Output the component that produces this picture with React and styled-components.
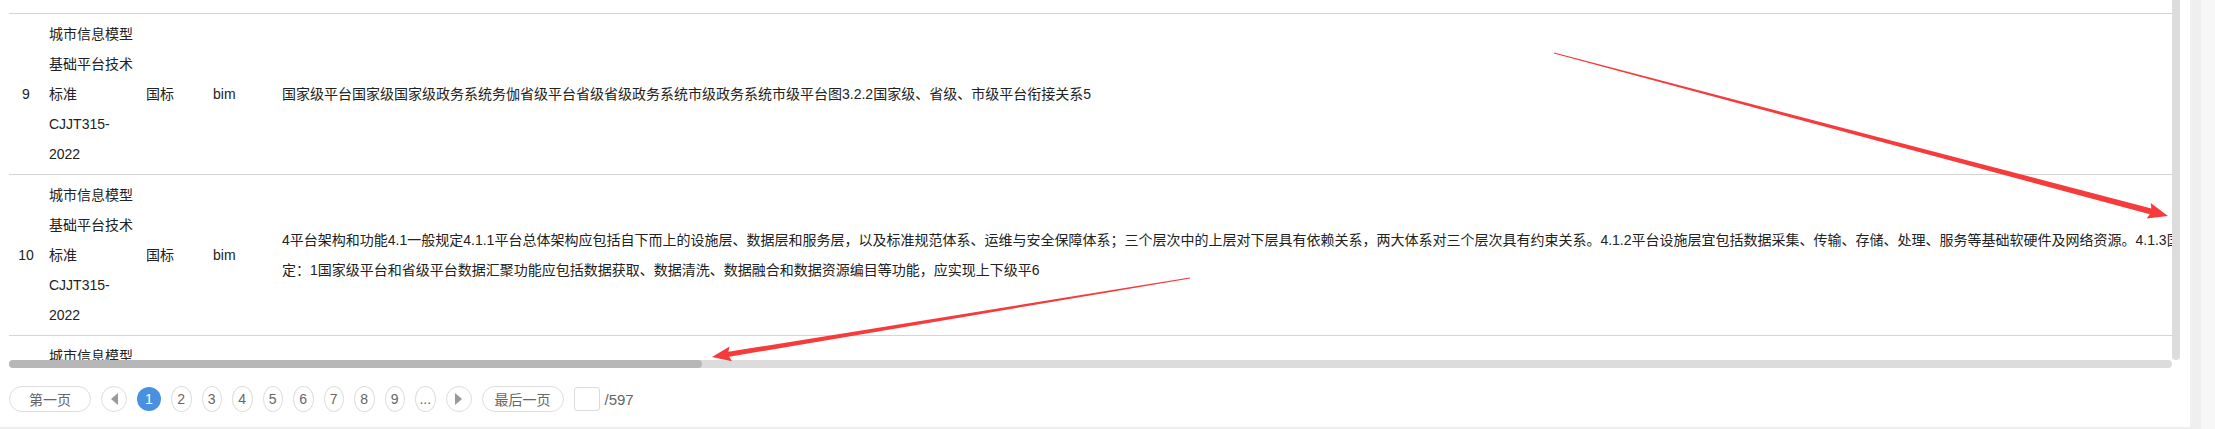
import React from 'react'
import styled, { createGlobalStyle } from 'styled-components'

const GlobalStyle = createGlobalStyle`
  html, body {
    margin: 0;
    padding: 0;
    background: #fff;
  }
  body {
    font-family: "Liberation Sans", "Noto Sans CJK SC", sans-serif;
  }
`

const Page = styled.div`
  position: relative;
  display: flex;
  width: 2215px;
  height: 429px;
  overflow: hidden;
`

const Main = styled.div`
  box-sizing: border-box;
  width: 2190px;
  height: 429px;
  padding: 0 10px 0 9px;
  border-bottom: 2px solid #eeeeee;
  display: flex;
  flex-direction: column;
`

const SideGutter = styled.div`
  width: 11px;
  background: #efefef;
`

const SidePanel = styled.div`
  flex: 1;
  background: #f7f7f7;
`

// table area with its own drawn scrollbars
const ScrollFrame = styled.div`
  display: grid;
  grid-template-columns: 1fr 8px;
  grid-template-rows: 360px 8px;
  height: 368px;
`

const Viewport = styled.div`
  box-sizing: border-box;
  padding-top: 13px;
  overflow: hidden;
`

const VBar = styled.div`
  background: #dcdcdc;
  border-radius: 0 0 4px 4px;
`

const HBar = styled.div`
  display: flex;
  background: #dcdcdc;
  border-radius: 4px;
`

const HThumb = styled.div`
  background: #b7b7b7;
  border-radius: 4px;
`

const Table = styled.table`
  width: 6750px;
  table-layout: fixed;
  border-collapse: collapse;
  font-size: 14px;
  line-height: 30px;
  color: #222;
`

const Row = styled.tr`
  border-top: 1px solid #d4d4d4;
  border-bottom: 1px solid #d4d4d4;
`

const Cell = styled.td`
  padding: 5px 6px;
  vertical-align: middle;
  text-align: ${p => (p.$center ? 'center' : 'left')};
  white-space: ${p => (p.$pre ? 'pre-line' : 'normal')};
`

const Pager = styled.div`
  display: flex;
  align-items: center;
  gap: 10px;
  height: 26px;
  margin-top: 18px;
  font-size: 14px;
  color: #666;
`

const PagerButton = styled.button`
  box-sizing: border-box;
  display: flex;
  align-items: center;
  justify-content: center;
  flex: none;
  width: ${p => p.$w}px;
  height: 26px;
  padding: 0;
  border: 1px solid #dedede;
  border-radius: ${p => (p.$round ? '50%' : '13px')};
  background: #fff;
  color: #666;
  font-family: inherit;
  font-size: 14px;
  cursor: pointer;

  svg {
    display: block;
  }
`

const PageNumber = styled(PagerButton)`
  width: ${p => (p.$active ? 24 : 20.5)}px;
  height: ${p => (p.$active ? 24 : 26)}px;
  border-radius: 50%;
  ${p => p.$active && `
    border: none;
    background: #4a90e2;
    color: #fff;
  `}
`

const JumpBox = styled.div`
  display: flex;
  align-items: center;
  gap: 5px;
`

const JumpInput = styled.input`
  box-sizing: border-box;
  width: 26px;
  height: 24px;
  padding: 0 4px;
  border: 1px solid #dcdcdc;
  border-radius: 3px;
  outline: none;
`

const Total = styled.span`
  font-size: 15px;
  color: #666;
`

const Overlay = styled.svg`
  position: absolute;
  left: 0;
  top: 0;
  width: 2215px;
  height: 429px;
  pointer-events: none;
`

const NAME = '城市信息模型基础平台技术标准CJJT315-2022'

const rows = [
  {
    no: 9,
    type: '国标',
    tag: 'bim',
    content: '国家级平台国家级国家级政务系统务伽省级平台省级省级政务系统市级政务系统市级平台图3.2.2国家级、省级、市级平台衔接关系5'
  },
  {
    no: 10,
    type: '国标',
    tag: 'bim',
    content:
      '4平台架构和功能4.1一般规定4.1.1平台总体架构应包括自下而上的设施层、数据层和服务层，以及标准规范体系、运维与安全保障体系；三个层次中的上层对下层具有依赖关系，两大体系对三个层次具有约束关系。4.1.2平台设施层宜包括数据采集、传输、存储、处理、服务等基础软硬件及网络资源。4.1.3国家级、省级、市级平台应具备数据汇聚、数据管理、查询与可视化、平台分析、平台运维、开发接口等基本功能。4.2数据汇聚4.2.1数据汇聚功能应符合下列规\n' +
      '定：1国家级平台和省级平台数据汇聚功能应包括数据获取、数据清洗、数据融合和数据资源编目等功能，应实现上下级平6'
  },
  {
    no: 11,
    type: '国标',
    tag: 'bim',
    content: '台数据的汇聚；2市级平台数据汇聚功能应包括数据获取、数据清洗、数据融合和数据资源编目等功能7'
  },
  {
    no: 12,
    type: '国标',
    tag: 'bim',
    content: '4.3数据管理4.3.1平台数据管理功能应包括数据资源目录管理、数据更新、数据共享等8'
  }
]

const pages = [1, 2, 3, 4, 5, 6, 7, 8, 9]

// visible part of the 6750px wide table
const scrollRatio = 2163 / 6750

function arrowPoints (from, to, tail, neck, head, wing) {
  const [sx, sy] = from
  const [tx, ty] = to
  const len = Math.hypot(tx - sx, ty - sy)
  const ux = (tx - sx) / len
  const uy = (ty - sy) / len
  const nx = -uy
  const ny = ux
  const bx = tx - ux * head
  const by = ty - uy * head
  const p = (x, y) => `${x.toFixed(1)},${y.toFixed(1)}`
  return [
    p(sx + nx * tail, sy + ny * tail),
    p(bx + nx * neck, by + ny * neck),
    p(bx - ux * 2 + nx * wing, by - uy * 2 + ny * wing),
    p(tx, ty),
    p(bx - ux * 2 - nx * wing, by - uy * 2 - ny * wing),
    p(bx - nx * neck, by - ny * neck),
    p(sx - nx * tail, sy - ny * tail)
  ].join(' ')
}

const Triangle = ({ dir }) => (
  <svg width="7" height="12" viewBox="0 0 7 12">
    <path d={dir === 'left' ? 'M7 0 L0 6 L7 12 Z' : 'M0 0 L7 6 L0 12 Z'} fill="#999" />
  </svg>
)

export default function App () {
  return (
    <Page>
      <GlobalStyle />
      <Main>
        <ScrollFrame>
          <Viewport>
            <Table>
              <colgroup>
                <col style={{ width: 34 }} />
                <col style={{ width: 97 }} />
                <col style={{ width: 67 }} />
                <col style={{ width: 69 }} />
                <col />
              </colgroup>
              <tbody>
                {rows.map(row => (
                  <Row key={row.no}>
                    <Cell $center>{row.no}</Cell>
                    <Cell>{NAME}</Cell>
                    <Cell>{row.type}</Cell>
                    <Cell>{row.tag}</Cell>
                    <Cell $pre>{row.content}</Cell>
                  </Row>
                ))}
              </tbody>
            </Table>
          </Viewport>
          <VBar />
          <HBar>
            <HThumb style={{ width: `${scrollRatio * 100}%` }} />
          </HBar>
        </ScrollFrame>
        <Pager>
          <PagerButton $w={82}>第一页</PagerButton>
          <PagerButton $w={26} $round><Triangle dir="left" /></PagerButton>
          {pages.map(n => (
            <PageNumber key={n} $active={n === 1}>{n}</PageNumber>
          ))}
          <PageNumber>...</PageNumber>
          <PagerButton $w={26} $round><Triangle dir="right" /></PagerButton>
          <PagerButton $w={82}>最后一页</PagerButton>
          <JumpBox>
            <JumpInput />
            <Total>/597</Total>
          </JumpBox>
        </Pager>
      </Main>
      <SideGutter />
      <SidePanel />
      <Overlay viewBox="0 0 2215 429">
        <polygon points={arrowPoints([1554, 53], [2168, 216], 0.5, 3, 18, 8)} fill="#f53b3b" />
        <polygon points={arrowPoints([1190, 278], [712, 357], 0.5, 2.5, 17, 7.5)} fill="#f53b3b" />
      </Overlay>
    </Page>
  )
}
